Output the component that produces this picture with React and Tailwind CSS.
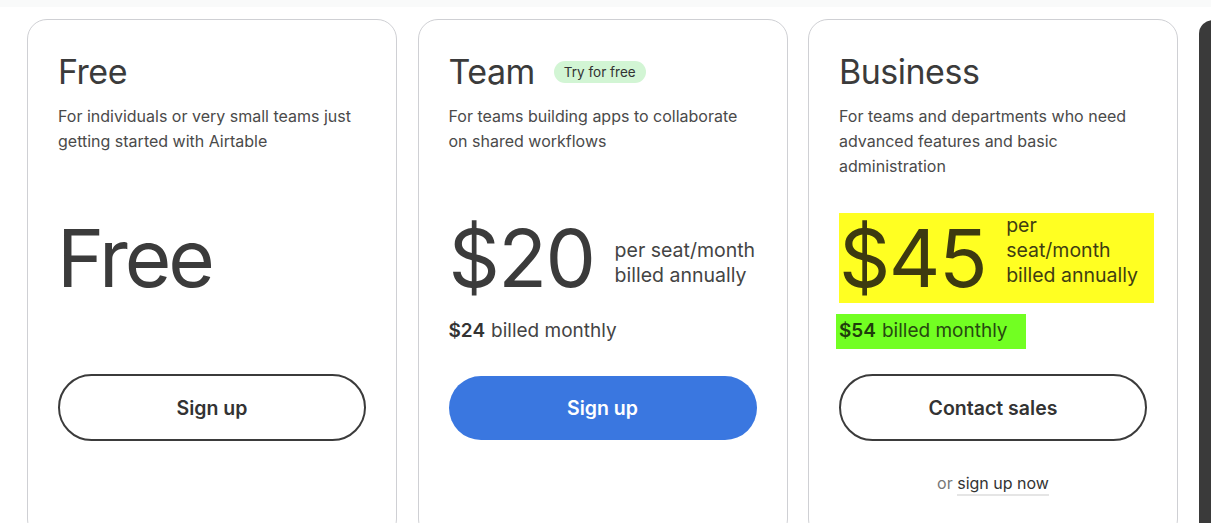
export default function App() {
  const font = { fontFamily: "Inter, 'Noto Sans', sans-serif" };
  return (
    <div className="w-[1211px] h-[523px] overflow-hidden bg-white text-[#3b3b3b]" style={font}>
      <div className="h-[7px] bg-[#f9fafa]" />
      <div className="flex gap-[20.5px] pl-[27px] pt-[12px]">
        {/* Free */}
        <div className="w-[370px] h-[520px] shrink-0 rounded-[20px] border border-[#cfd0d4] px-[30px] pt-[35px]">
          <div className="flex items-center h-[34px]">
            <h3 className="text-[34px] leading-[34px] tracking-[-0.5px]">Free</h3>
          </div>
          <p className="mt-[15px] h-[75px] text-[16px] leading-[25px] text-[#4a4a4a]">
            For individuals or very small teams just getting started with Airtable
          </p>
          <div className="mt-[34px] h-[90px] flex items-center">
            <span className="-ml-[1px] text-[80px] leading-[90px] tracking-[-3px]">Free</span>
          </div>
          <div className="mt-[11px] h-[35px]" />
          <div className="mt-[25px] h-[67px]">
            <button className="w-full h-[67px] pt-[2px] rounded-full border-2 border-[#3b3b3b] text-[19.5px] font-semibold text-[#333]">
              Sign up
            </button>
          </div>
        </div>

        {/* Team */}
        <div className="w-[370px] h-[520px] shrink-0 rounded-[20px] border border-[#cfd0d4] px-[30px] pt-[35px]">
          <div className="flex items-center h-[34px] gap-[19px]">
            <h3 className="text-[34px] leading-[34px] tracking-[-0.5px]">Team</h3>
            <span className="rounded-full bg-[#d2f5d4] px-[10px] h-[22px] flex items-center text-[13.5px] text-[#333]">
              Try for free
            </span>
          </div>
          <p className="mt-[15px] h-[75px] text-[16px] leading-[25px] text-[#4a4a4a]">
            For teams building apps to collaborate on shared workflows
          </p>
          <div className="mt-[34px] h-[90px] flex items-end gap-[20px]">
            <span className="text-[80px] leading-[90px] tracking-[-1.5px]">$20</span>
            <span className="pb-[15px] text-[19.5px] leading-[25px] text-[#444]">
              per seat/month
              <br />
              billed annually
            </span>
          </div>
          <div className="mt-[11px] h-[35px] flex items-center text-[19px] text-[#444]">
            <span className="font-semibold text-[#333]">$24</span>
            <span className="ml-[6px]">billed monthly</span>
          </div>
          <div className="mt-[25px] h-[67px] flex items-center">
            <button className="w-full h-[64px] pt-[2px] rounded-full bg-[#3a77e0] text-[19.5px] font-semibold text-white">
              Sign up
            </button>
          </div>
        </div>

        {/* Business */}
        <div className="w-[370px] h-[520px] shrink-0 rounded-[20px] border border-[#cfd0d4] px-[30px] pt-[35px]">
          <div className="flex items-center h-[34px]">
            <h3 className="text-[34px] leading-[34px] tracking-[-0.5px]">Business</h3>
          </div>
          <p className="mt-[15px] h-[75px] text-[16px] leading-[25px] text-[#4a4a4a]">
            For teams and departments who need advanced features and basic administration
          </p>
          <div className="mt-[34px] h-[90px] w-[315px] flex items-start gap-[20px] bg-[#ffff22]">
            <span className="text-[80px] leading-[90px] tracking-[-1.5px] text-[#3d3a10]">$45</span>
            <span className="text-[19.5px] leading-[25px] text-[#403d12]">
              per
              <br />
              seat/month
              <br />
              billed annually
            </span>
          </div>
          <div className="mt-[11px] -ml-[3px] h-[35px] w-[190px] pl-[3px] flex items-center text-[19px] bg-[#72ff22] text-[#264a10]">
            <span className="font-semibold text-[#1f3d0c]">$54</span>
            <span className="ml-[6px]">billed monthly</span>
          </div>
          <div className="mt-[25px] h-[67px]">
            <button className="w-full h-[67px] pt-[2px] rounded-full border-2 border-[#3b3b3b] text-[19.5px] font-semibold text-[#333]">
              Contact sales
            </button>
          </div>
          <div className="mt-[30px] text-center text-[16px]">
            <span className="text-[#777]">or </span>
            <span className="text-[#333] border-b-2 border-[#e5e5e5] pb-[1px]">sign up now</span>
          </div>
        </div>

        {/* Enterprise (cut off) */}
        <div className="w-[370px] h-[520px] shrink-0 mt-[1px] rounded-[14px] bg-[#3a3a3a]" />
      </div>
    </div>
  );
}
